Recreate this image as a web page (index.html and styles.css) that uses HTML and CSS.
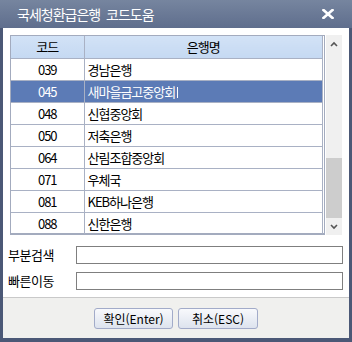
FILE: index.html
```html
<!DOCTYPE html>
<html lang="ko">
<head>
    <meta charset="UTF-8">
    <title>국세청환급은행 코드도움</title>
    <link rel="stylesheet" href="styles.css">
</head>
<body>
    <div class="window">
        <div class="titlebar">
            <span class="title">국세청환급은행&nbsp; 코드도움</span>
            <svg class="close" width="12" height="10" viewBox="0 0 12 10">
                <path d="M1.5 1 L10.5 9 M10.5 1 L1.5 9" stroke="#fff" stroke-width="2.6" stroke-linecap="square"/>
            </svg>
        </div>

        <div class="content">
            <div class="grid-area">
                <div class="grid">
                    <table class="bank-table">
                        <thead>
                            <tr><th class="col-code">코드</th><th>은행명</th></tr>
                        </thead>
                        <tbody>
                            <tr><td class="col-code">039</td><td>경남은행</td></tr>
                            <tr class="selected"><td class="col-code">045</td><td>새마을금고중앙회<span class="caret"></span></td></tr>
                            <tr><td class="col-code">048</td><td>신협중앙회</td></tr>
                            <tr><td class="col-code">050</td><td>저축은행</td></tr>
                            <tr><td class="col-code">064</td><td>산림조합중앙회</td></tr>
                            <tr><td class="col-code">071</td><td>우체국</td></tr>
                            <tr><td class="col-code">081</td><td>KEB하나은행</td></tr>
                            <tr><td class="col-code">088</td><td>신한은행</td></tr>
                        </tbody>
                    </table>
                </div>

                <div class="scrollbar">
                    <div class="scroll-btn">
                        <svg width="8" height="6" viewBox="0 0 8 6"><path d="M1 5 L4 2 L7 5" fill="none" stroke="#555" stroke-width="1.6"/></svg>
                    </div>
                    <div class="scroll-track"><div class="scroll-thumb"></div></div>
                    <div class="scroll-btn">
                        <svg width="8" height="6" viewBox="0 0 8 6"><path d="M1 1 L4 4 L7 1" fill="none" stroke="#555" stroke-width="1.6"/></svg>
                    </div>
                </div>
            </div>

            <div class="fields">
                <div class="field">
                    <label>부분검색</label>
                    <input type="text" class="text-input">
                </div>
                <div class="field">
                    <label>빠른이동</label>
                    <input type="text" class="text-input">
                </div>
            </div>
        </div>

        <div class="footer">
            <button class="btn btn-ok">확인(Enter)</button>
            <button class="btn btn-cancel">취소(ESC)</button>
        </div>
    </div>
</body>
</html>
```

FILE: styles.css
```css
* {
    margin: 0;
    padding: 0;
    box-sizing: border-box;
}

body {
    font-family: "Noto Sans CJK KR", "Noto Sans", sans-serif;
    font-size: 12px;
    color: #000;
    background: #fff;
}

.window {
    width: 352px;
    height: 342px;
    background: #4b5876;
    padding: 0 3px 4px 3px;
    display: flex;
    flex-direction: column;
}

/* title bar */
.titlebar {
    height: 28px;
    margin: 0 -3px;
    padding: 0 18px 0 17px;
    background: linear-gradient(#76859f, #5f6e8d);
    display: flex;
    align-items: center;
    justify-content: space-between;
}

.title {
    color: #fff;
    font-size: 14px;
    letter-spacing: -1px;
}

.close {
    display: block;
}

/* white area */
.content {
    flex: 1;
    background: #fff;
    padding-top: 7px;
    display: flex;
    flex-direction: column;
}

.grid-area {
    display: flex;
    height: 200px;
    margin: 0 7px;
    gap: 1px;
}

.grid {
    width: 315px;
    border: 1px solid #a3abbe;
    border-bottom-width: 2px;
    padding-right: 1px;
}

.bank-table {
    width: 100%;
    border-collapse: collapse;
    table-layout: fixed;
}

.bank-table th,
.bank-table td {
    height: 22px;
    border-right: 1px solid #a9b1c4;
    border-bottom: 1px solid #a9b1c4;
    font-weight: normal;
    font-size: 13px;
    letter-spacing: -1px;
    line-height: 21px;
    white-space: nowrap;
    overflow: hidden;
}

.bank-table th {
    background: linear-gradient(#d2e2f6, #c5d9f2);
    text-align: center;
}

.bank-table td {
    padding-left: 3px;
}

.bank-table tbody tr:last-child td {
    border-bottom: none;
    height: 21px;
}

.bank-table .col-code {
    width: 73px;
    text-align: center;
    padding-left: 0;
}

.bank-table tr.selected td {
    background: #5c7bb6;
    color: #fff;
}

.caret {
    display: inline-block;
    width: 1px;
    height: 11px;
    background: #fff;
    margin-left: 2px;
    vertical-align: -1px;
}

/* scrollbar */
.scrollbar {
    width: 16px;
    background: #f0f0f0;
    display: flex;
    flex-direction: column;
}

.scroll-btn {
    height: 17px;
    display: flex;
    align-items: center;
    justify-content: center;
}

.scroll-track {
    flex: 1;
}

.scroll-thumb {
    margin-top: 106px;
    height: 60px;
    background: #cdcdcd;
}

/* search fields */
.fields {
    padding: 10px 6px 0 5px;
    display: flex;
    flex-direction: column;
    gap: 7px;
}

.field {
    display: flex;
    align-items: center;
}

.field label {
    width: 68px;
    font-size: 13px;
    letter-spacing: -0.5px;
}

.text-input {
    flex: 1;
    height: 18px;
    border: 1px solid #7f7f7f;
    background: #fff;
    outline: none;
}

/* footer */
.footer {
    height: 41px;
    border-top: 1px solid #c9c9c9;
    background: #f0f0ee;
    padding-top: 10px;
    display: flex;
    justify-content: center;
    align-items: flex-start;
    gap: 5px;
}

.btn {
    height: 21px;
    border: 1px solid #a2abc9;
    border-radius: 3px;
    background: linear-gradient(#f8f9fc, #dde3ee);
    font-family: inherit;
    font-size: 12px;
    color: #000;
}

.btn-ok {
    width: 79px;
}

.btn-cancel {
    width: 80px;
}
```
